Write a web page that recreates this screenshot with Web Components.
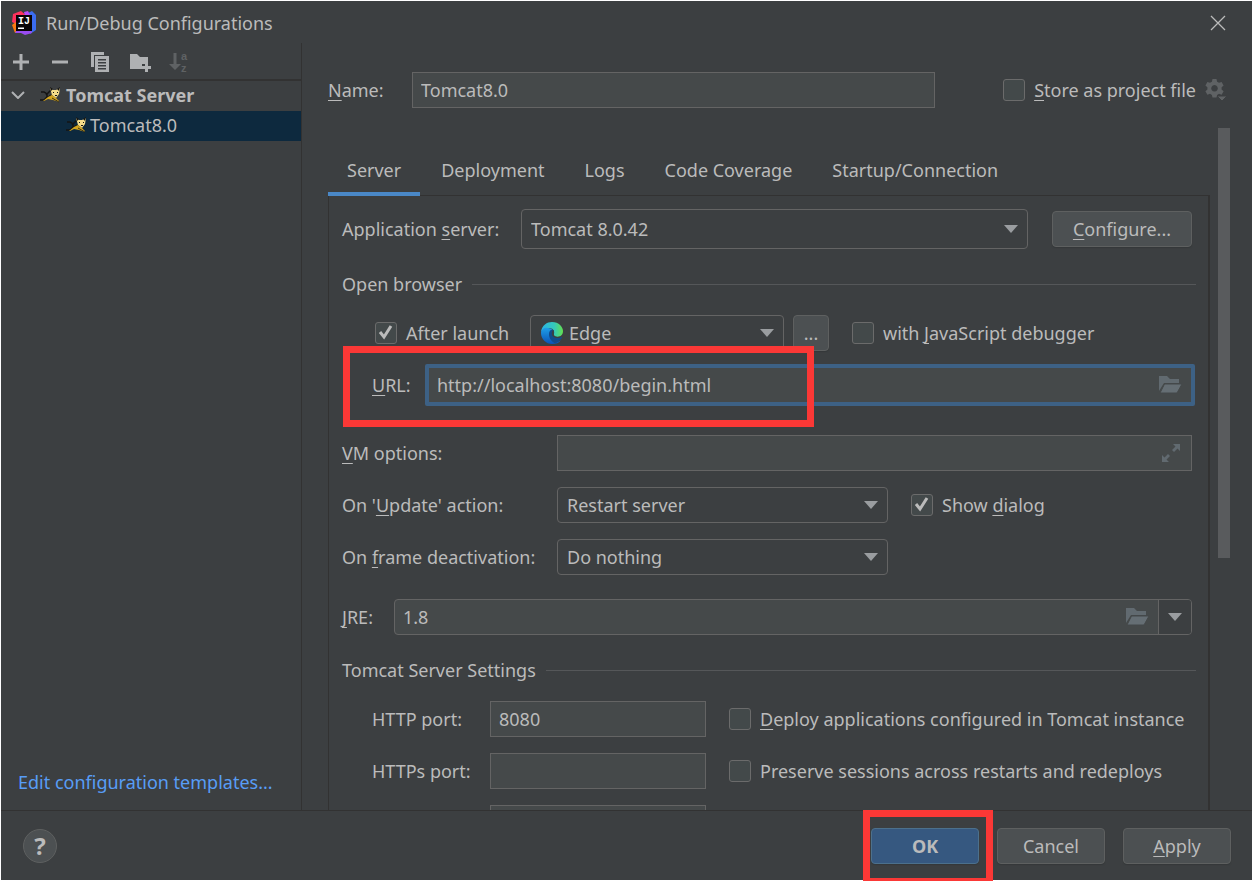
<!DOCTYPE html>
<html lang="en">
<head>
<meta charset="utf-8">
<title>Run/Debug Configurations</title>
<style>
  html, body { margin: 0; height: 100%; }
  body {
    --bg: #3c3f41; --line: #323232; --field: #45494a; --edge: #646464;
    --accent: #4a88c7; --red: #fb3836; --icon: #afb1b3;
    background: #fff; color: #bbb;
    font: 18px/24px "Noto Sans", "Open Sans", sans-serif;
  }
  u { text-decoration: underline; text-decoration-thickness: 1px; text-underline-offset: 3px; text-decoration-skip-ink: none; }
  .row { display: flex; align-items: center; margin-right: 4px; }
  .row + .row { margin-top: 16px; }
  .server { --label: 179px; --h: 40px; gap: 24px; }
  .server rd-select { flex: 1; }
  .server rd-button { --w: 140px; }
  .browser { padding-left: 33px; }
  .browser .after { flex: 0 0 155px; }
  .browser rd-select { flex: 0 0 254px; }
  .browser rd-button { --w: 36px; margin: 0 23px 0 9px; }
  .row.url { margin: 13px 1px 0 0; padding-left: 30px; --label: 53px; }
  .url rd-field { flex: 1; }
  .row.vm { margin-top: 29px; }
  .options { --label: 215px; }
  .options rd-field { flex: 1; }
  .options rd-select { flex: 0 0 546px; margin-right: 23px; }
  .row.jre { margin-top: 24px; --label: 52px; }
  .jre rd-field { flex: 1; }
  .port { padding-left: 30px; --label: 118px; }
  .port rd-field { flex: 0 0 334px; margin-right: 23px; }
  .name { --label: 84px; }
  rd-sidebar a { color: #589df6; text-decoration: none; }
  .ok { margin-right: 18px; }
  .cancel { margin-right: 18px; }
</style>
</head>
<body>

<rd-dialog heading="Run/Debug Configurations">
  <rd-sidebar slot="side">
    <rd-tree slot="tree"></rd-tree>
    <a href="#templates">Edit configuration templates...</a>
  </rd-sidebar>

  <rd-field class="name" slot="name" value="Tomcat8.0"><u>N</u>ame:</rd-field>
  <rd-checkbox slot="store"><u>S</u>tore as project file</rd-checkbox>

  <rd-tabs items="Server,Deployment,Logs,Code Coverage,Startup/Connection">
    <div class="row server">
      <rd-select value="Tomcat 8.0.42">Application <u>s</u>erver:</rd-select>
      <rd-button><u>C</u>onfigure...</rd-button>
    </div>

    <rd-section>Open browser</rd-section>
    <div class="row browser">
      <rd-checkbox class="after" checked>After launch</rd-checkbox>
      <rd-select value="Edge" icon="edge" name="Browser"></rd-select>
      <rd-button class="more">...</rd-button>
      <rd-checkbox>with <u>J</u>avaScript debugger</rd-checkbox>
    </div>
    <rd-mark class="row url" kind="url">
      <rd-field value="http://localhost:8080/begin.html" icon="folder" active><u>U</u>RL:</rd-field>
    </rd-mark>

    <div class="row options vm">
      <rd-field icon="expand"><u>V</u>M options:</rd-field>
    </div>
    <div class="row options">
      <rd-select value="Restart server">On '<u>U</u>pdate' action:</rd-select>
      <rd-checkbox checked>Show <u>d</u>ialog</rd-checkbox>
    </div>
    <div class="row options">
      <rd-select value="Do nothing">On <u>f</u>rame deactivation:</rd-select>
    </div>
    <div class="row jre">
      <rd-field value="1.8" icon="folder" combo><u>J</u>RE:</rd-field>
    </div>

    <rd-section>Tomcat Server Settings</rd-section>
    <div class="row port">
      <rd-field value="8080">HTTP port:</rd-field>
      <rd-checkbox><u>D</u>eploy applications configured in Tomcat instance</rd-checkbox>
    </div>
    <div class="row port">
      <rd-field>HTTPs port:</rd-field>
      <rd-checkbox>Preserve sessions across restarts and redeploys</rd-checkbox>
    </div>
    <div class="row port">
      <rd-field name="JMX port"></rd-field>
    </div>
  </rd-tabs>

  <rd-mark class="ok" slot="buttons" kind="ok"><rd-button primary>OK</rd-button></rd-mark>
  <rd-button class="cancel" slot="buttons">Cancel</rd-button>
  <rd-button slot="buttons"><u>A</u>pply</rd-button>
</rd-dialog>

<script>
const ICONS = {
  logo: [24, 24, `<path d="M1 3 9 0l6 5-9 9-6-3z" fill="#fe315d"/><path d="M0 14l5-4 3 9-5 3z" fill="#f97a12"/><path d="M14 3l6-3 4 4v15l-6 4z" fill="#3b6cf0"/><path d="M3 22l3-5 12-2 2 7-7 2-4-2z" fill="#9a4cf0"/><path d="M12 1l4-1 2 4-5 1z" fill="#b74af7"/><path d="M4 4h16v16H4z" fill="#090406"/><path d="M6 16.500h6v1.500H6z" fill="#fff"/><text x="6" y="13" font-family="Liberation Mono" font-weight="700" font-size="10" fill="#fff">IJ</text>`],
  close: [16, 16, `<path d="M1 1l14 14M15 1 1 15" stroke="#bbb" stroke-width="1.300" fill="none"/>`],
  add: [16, 16, `<path d="M6.500 0h3v6.500H16v3H9.500V16h-3V9.500H0v-3h6.500z" fill="#afb1b3"/>`],
  remove: [16, 16, `<path d="M0 6.500h16v3H0z" fill="#afb1b3"/>`],
  copy: [18, 20, `<path d="M0 0h13v3H3v12H0z" fill="#afb1b3"/><path fill-rule="evenodd" d="M4 4h14v16H4zm3 3v1.500h8V7zm0 3v1.500h8V10zm0 3v1.500h8V13zm0 3v1.500h8V16z" fill="#afb1b3"/>`],
  newfolder: [22, 20, `<path d="M0 2h7l3 3h8v7h-6v5H0z" fill="#afb1b3"/><path d="M15 11h3v3h3v3h-3v3h-3v-3h-3v-3h3z" fill="#afb1b3"/>`],
  sort: [20, 28, `<path d="M4.500 5h3v11H12l-6 6-6-6h4.500z" fill="#5f6264"/><text x="12" y="12" font-family="Liberation Sans" font-weight="700" font-size="11" fill="#5f6264">a</text><text x="12" y="24" font-family="Liberation Sans" font-weight="700" font-size="11" fill="#5f6264">z</text>`],
  chevron: [14, 8, `<path d="M1 1l6 6 6-6" stroke="#afb1b3" stroke-width="2" fill="none"/>`],
  cat: [20, 16, `<path d="M0 13h4l3-3V7L4 5H1M6 8l5-5M7 11l4-3" stroke="#141414" stroke-width="1.500" fill="none"/><path d="M10 1l3 2h3l4-2-1 6-3 4-4-3z" fill="#f4dc8a"/><path d="M10 0l3 2-2 2zM20 0l-3 2 2 2zM13 5h1v1h-1zM17 5h1v1h-1zM15 8h2v1h-2z" fill="#141414"/><path d="M3 14l5-4 4-2 4 3 3 3v1l-6-2-5-1-4 2z" fill="#d2a41e"/><path d="M12 11l7 4" stroke="#141414" stroke-width=".8"/>`],
  gear: [22, 22, `<path fill-rule="evenodd" d="M7.500 0h4l.6 2.700 1.900 1.100 2.600-.9 2 3.500-2 1.800v2.200l2 1.800-2 3.500-2.600-.9-1.900 1.100-.6 2.600h-4L6.900 15.900 5 14.800l-2.600.9-2-3.500 2-1.800V8.200l-2-1.800 2-3.500 2.600.9 1.900-1.100zM9.500 6a3.300 3.300 0 1 0 .01 0z" fill="#5f6264"/><path d="M12 17h10l-5 5z" fill="#5f6264" stroke="#3c3f41"/>`],
  arrow: [14, 8, `<path d="M0 0h14L7 8z" fill="#9a9da0"/>`],
  folder: [23, 18, `<path d="M0 0h8l3 3h9v4H5L0 15z" fill="#616a70"/><path d="M5.500 8H23l-5 9H1z" fill="#656e74" stroke="#45494a"/>`],
  expand: [20, 18, `<path d="M11 0h7v7l-2.500-2.500L12 8l-2-2 3.500-3.500zM0 11l2.500 2.500L6 10l2 2-3.500 3.500L7 18H0z" fill="#616a70"/>`],
  edge: [22, 22, `<defs><linearGradient id="g1"><stop stop-color="#2bb3e6"/><stop offset=".6" stop-color="#35c8bb"/><stop offset="1" stop-color="#63e04f"/></linearGradient><linearGradient id="g2" x2="0" y2="1"><stop stop-color="#1f9fe8"/><stop offset="1" stop-color="#0a52b5"/></linearGradient></defs><path d="M0 10C1 3 6 0 11 0c7 0 11 5 11 9 0 4-3 6-6 6-3 0-4-1-3-3 1-4-2-6-5-6-4 0-7 2-8 4z" fill="url(#g1)"/><path d="M0 11c0-4 4-6 7-5 4 0 6 3 5 5-4 0-4 6 1 8 2 1 5 1 7-1-2 3-5 4-9 4C5 22 0 17 0 11z" fill="url(#g2)"/><path d="M8 12c0-3 2-5 4-4 1 1 1 2 .5 3-1 3 1 5 4 5 2 0 3-.5 4-1 .5 0 .6.300.300 1-2 3-5 5-7 5-3-1-6-5-5.800-9z" fill="#114a8b"/><path d="M12 8c2 1 0 3 1 5 1 2 4 2 7 1-3 3-8 2-9-1-.5-2 0-4 1-5z" fill="#3c3f41"/>`],
  check: [21, 21, `<path d="M5 10l4 5 7-11" stroke="#bbb" stroke-width="3" fill="none"/>`]
};
const icon = (n, c = '') => {
  const [w, h, body] = ICONS[n];
  return `<svg class="${c}" width="${w}" height="${h}" viewBox="0 0 ${w} ${h}" aria-hidden="true" style="display:block;flex:none">${body}</svg>`;
};
class Base extends HTMLElement {
  connectedCallback() {
    if (this.shadowRoot) return;
    this.attachShadow({ mode: 'open' }).innerHTML =
      `<style>*{box-sizing:border-box}button,input,select{font:inherit;color:inherit;margin:0}${this.css()}</style>${this.html()}`;
  }
  at(n) { return this.getAttribute(n) || ''; }
}
const define = (name, css, html) => customElements.define(name, class extends Base {
  css() { return css; }
  html() { return html(this); }
});

define('rd-dialog', `
  :host { display: flex; flex-direction: column; box-sizing: border-box; height: 100vh; border: 1px solid #fff; background: var(--bg); }
  header { display: flex; align-items: center; height: 42px; padding: 2px 26px 0 11px; gap: 10px; flex: none; }
  h1 { font: inherit; margin: 0; flex: 1; }
  header button { padding: 0; border: 0; background: none; }
  .body { display: flex; flex: 1; min-height: 0; }
  main { flex: 1; min-width: 0; display: flex; flex-direction: column; padding: 29px 22px 0 26px; overflow: hidden; }
  .name { display: flex; align-items: center; flex: none; padding-right: 3px; }
  .name slot[name=name]::slotted(*) { flex: 1; margin-right: 68px; }
  .name svg { margin-left: 9px; }
  .view { display: flex; flex: 1; min-height: 0; margin-top: 20px; gap: 8px; }
  .view slot::slotted(*) { flex: 1; min-width: 0; }
  .bar { width: 12px; flex: none; }
  .bar div { height: 63%; background: #595b5d; }
  footer { display: flex; align-items: center; flex: none; height: 70px; padding: 0 21px 0 22px; border-top: 1px solid var(--line); }
  .help { width: 34px; height: 34px; border-radius: 50%; border: 1px solid #5e6060; background: #4c5052; padding: 0; margin-right: auto; font-weight: 700; font-size: 24px; line-height: 32px; }
`, e => `
  <header>${icon('logo')}<h1>${e.at('heading')}</h1><button aria-label="Close">${icon('close')}</button></header>
  <div class="body"><slot name="side"></slot>
    <main><div class="name"><slot name="name"></slot><slot name="store"></slot>${icon('gear')}</div>
      <div class="view"><slot></slot><div class="bar"><div></div></div></div></main></div>
  <footer><button class="help" aria-label="Help">?</button><slot name="buttons"></slot></footer>`);

define('rd-sidebar', `
  :host { display: flex; flex-direction: column; flex: 0 0 301px; box-sizing: border-box; border-right: 1px solid var(--line); }
  nav { display: flex; align-items: center; height: 38px; flex: none; padding: 2px 0 0 12px; border-bottom: 2px solid var(--line); }
  nav button { padding: 0; border: 0; background: none; width: 39px; flex: none; }
  footer { margin-top: auto; padding: 0 0 16px 17px; white-space: nowrap; }
`, () => `
  <nav>${[['add', 'Add'], ['remove', 'Remove'], ['copy', 'Copy'], ['newfolder', 'New folder'], ['sort', 'Sort']]
    .map(([i, t]) => `<button aria-label="${t}">${icon(i)}</button>`).join('')}</nav>
  <slot name="tree"></slot><footer><slot></slot></footer>`);

define('rd-tree', `
  :host { display: block; }
  ul { list-style: none; margin: 0; padding: 0; }
  li { display: flex; align-items: center; height: 30px; padding-bottom: 2px; }
  .group { font-weight: 700; padding-left: 10px; gap: 6px; }
  .group svg:first-child { margin-right: 9px; }
  .item { padding-left: 65px; gap: 4px; background: #0d293e; }
`, () => `<ul role="tree">
  <li class="group" role="treeitem" aria-expanded="true">${icon('chevron')}${icon('cat')}<span>Tomcat Server</span></li>
  <li class="item" role="treeitem" aria-selected="true">${icon('cat')}<span>Tomcat8.0</span></li></ul>`);

define('rd-tabs', `
  :host { display: block; padding-top: 17px; }
  nav { display: flex; gap: 2px; height: 51px; border-bottom: 1px solid var(--line); }
  button { border: 0; background: none; padding: 0 19px 2px 19px; height: 51px; white-space: nowrap; flex: none; }
  button[aria-selected=true] { border-bottom: 4px solid var(--accent); padding-top: 2px; padding-bottom: 0; }
  section { border: solid var(--line); border-width: 0 2px 0 1px; padding: 13px 12px 0 13px; }
`, e => `
  <nav role="tablist">${e.at('items').split(',').map((t, i) => `<button role="tab" aria-selected="${!i}">${t}</button>`).join('')}</nav>
  <section role="tabpanel"><slot></slot></section>`);

define('rd-section', `
  :host { display: flex; align-items: center; height: 66px; box-sizing: border-box; padding-top: 4px; gap: 10px; }
  h2 { font: inherit; margin: 0; white-space: nowrap; }
  i { flex: 1; height: 1px; background: #555759; }
`, () => `<h2><slot></slot></h2><i></i>`);

define('rd-field', `
  :host { display: flex; align-items: center; min-width: 0; }
  label { flex: 0 0 var(--label); white-space: nowrap; }
  .box { flex: 1; min-width: 0; height: 36px; display: flex; align-items: center; background: var(--field); border: 1px solid var(--edge); }
  input { flex: 1; min-width: 0; width: 0; height: 100%; padding: 0 8px; border: 0; outline: 0; background: none; }
  svg { margin-right: 9px; }
  :host([active]) .box { height: 42px; border: 4px solid #3d6185; border-radius: 2px; }
  :host([combo]) .box { border-radius: 4px; overflow: hidden; }
  button { width: 33px; height: 100%; flex: none; border: 0; border-left: 1px solid var(--edge); background: var(--bg); padding: 0 0 0 9px; }
`, e => `<label for="c"><slot></slot></label>
  <div class="box"><input id="c" type="text" value="${e.at('value')}" ${e.at('name') ? `aria-label="${e.at('name')}"` : ''}>${e.at('icon') ? icon(e.at('icon')) : ''}${e.hasAttribute('combo') ? `<button aria-label="Show list">${icon('arrow')}</button>` : ''}</div>`);

define('rd-select', `
  :host { display: flex; align-items: center; min-width: 0; }
  label { flex: 0 0 var(--label, 0px); white-space: nowrap; }
  .box { flex: 1; min-width: 0; display: grid; align-items: center; }
  .box > * { grid-area: 1 / 1; }
  select { appearance: none; width: 100%; height: var(--h, 36px); padding: 0 9px; border: 1px solid var(--edge); border-radius: 4px; background: var(--bg); }
  :host([icon]) select { padding-left: 38px; }
  svg { pointer-events: none; }
  .arrow { justify-self: end; margin-right: 10px; }
  .lead { margin-left: 11px; }
`, e => `<label for="c"><slot></slot></label>
  <div class="box"><select id="c" ${e.at('name') ? `aria-label="${e.at('name')}"` : ''}><option>${e.at('value')}</option></select>
  ${e.at('icon') ? icon(e.at('icon'), 'lead') : ''}${icon('arrow', 'arrow')}</div>`);

define('rd-checkbox', `
  :host { display: block; }
  label { display: flex; align-items: center; gap: 9px; white-space: nowrap; }
  .box { display: grid; flex: none; }
  .box > * { grid-area: 1 / 1; }
  input { appearance: none; width: 22px; height: 22px; border: 1px solid #6b6b6b; border-radius: 3px; background: #43494a; }
  svg { pointer-events: none; }
`, e => `<label><span class="box"><input type="checkbox" ${e.hasAttribute('checked') ? 'checked' : ''}>${e.hasAttribute('checked') ? icon('check') : ''}</span><span><slot></slot></span></label>`);

define('rd-button', `
  :host { display: block; flex: none; }
  button { width: var(--w, 108px); height: 36px; padding: 0; border: 1px solid #5e6060; border-radius: 4px; background: #4c5052; box-shadow: 0 1px 1px #35383a; }
  :host([primary]) button { background: #365880; border-color: #4c708c; font-weight: 700; }
`, () => `<button><slot></slot></button>`);

/* Red annotation frame laid over the control it wraps. */
define('rd-mark', `
  :host { position: relative; display: flex; }
  i { position: absolute; z-index: 1; pointer-events: none; border: 7px solid var(--red); top: -18px; }
  .url { left: 1px; width: 471px; height: 81px; }
  .ok { left: -8px; width: 130px; height: 71px; border-bottom-width: 3px; }
`, e => `<slot></slot><i class="${e.at('kind')}"></i>`);
</script>
</body>
</html>
